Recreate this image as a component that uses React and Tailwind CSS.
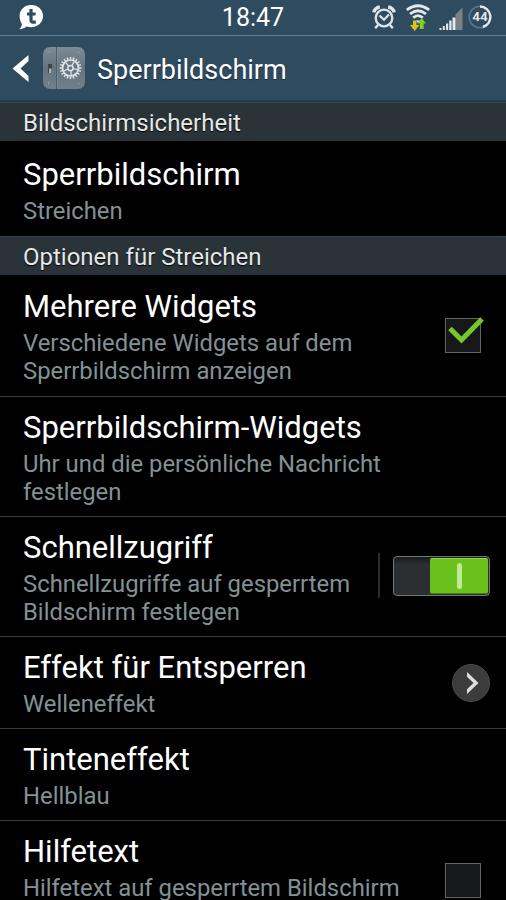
import { useState } from 'react';
import clsx from 'clsx';

const ENTRIES = [
  { type: 'section', label: 'Bildschirmsicherheit' },
  { type: 'row', id: 'lock', title: 'Sperrbildschirm', summary: 'Streichen', spacing: 'pt-[13px] pb-[11px]' },
  { type: 'section', label: 'Optionen für Streichen' },
  { type: 'row', id: 'multi', title: 'Mehrere Widgets', summary: 'Verschiedene Widgets auf dem Sperrbildschirm anzeigen', control: 'checkbox', divider: true, spacing: 'pt-[11px] pb-[11px]' },
  { type: 'row', id: 'widgets', title: 'Sperrbildschirm-Widgets', summary: 'Uhr und die persönliche Nachricht festlegen', divider: true },
  { type: 'row', id: 'shortcuts', title: 'Schnellzugriff', summary: 'Schnellzugriffe auf gesperrtem Bildschirm festlegen', control: 'switch', divider: true },
  { type: 'row', id: 'effect', title: 'Effekt für Entsperren', summary: 'Welleneffekt', control: 'arrow', divider: true },
  { type: 'row', id: 'ink', title: 'Tinteneffekt', summary: 'Hellblau', divider: true },
  { type: 'row', id: 'help', title: 'Hilfetext', summary: 'Hilfetext auf gesperrtem Bildschirm', control: 'checkbox', tall: true },
];

function ChatIcon() {
  return (
    <svg className="-mt-0.5 h-[26px] w-[26px]" viewBox="0 0 26 26">
      <path d="M13.200 1C6.600 1 1.600 5.800 1.600 12c0 3.700 1.200 6.200 2.200 7.800.3 1.800-.6 3.800-2.600 5.400 3.200-.1 5.600-1 7.400-2.600 1.400.4 2.900.6 4.600.6C19.900 23.200 25 18.400 25 12S19.900 1 13.200 1z" fill="#fff" />
      <path d="M13 5v11q0 2.200 2.200 2.200h2.600M9 10h8.600" fill="none" stroke="#2f4b60" strokeWidth="3.200" />
    </svg>
  );
}

function AlarmIcon() {
  return (
    <svg className="-mt-0.5 h-[26px] w-[24px]" viewBox="0 0 24 26" fill="none" stroke="#dfe6ea">
      <circle cx="12" cy="14" r="8.300" strokeWidth="2.300" />
      <path d="M7.500 11.500l4.500 4.300 5-5.300" strokeWidth="2.200" />
      <path d="M1.800 8.300C2.500 5.500 4.800 3.500 7.800 3M22.200 8.300C21.500 5.500 19.200 3.500 16.200 3" strokeWidth="3.400" />
      <path d="M6 21l-2.800 3.200M18 21l2.800 3.200" strokeWidth="2.500" />
    </svg>
  );
}

function WifiIcon() {
  return (
    <svg className="-mt-0.5 h-[28px] w-[26px]" viewBox="0 0 26 28" fill="none">
      <g stroke="#e3e8ea" strokeWidth="2.800">
        <path d="M1.800 7Q13-1.500 24.200 7" />
        <path d="M5 11Q13 4.500 21 11" />
        <path d="M8.200 14.800Q13 10.500 17.800 14.800" />
      </g>
      <path d="M11 17.500h4l-2 2.500z" fill="#e3e8ea" />
      <path d="M8 17.500h3.500v4.500h3l-4.800 6L5 22h3z" fill="#d9c31c" />
      <path d="M14.800 26V20.500h-2.500l4.400-5.500 4.400 5.500h-2.500V26z" fill="#7fd024" />
    </svg>
  );
}

function SignalIcon() {
  return (
    <svg className="mt-0.5 h-[24px] w-[24px]" viewBox="0 0 24 24">
      <path d="M16.500 7.500L23.500 0.500V23h-7z" fill="#7b8085" />
      <path d="M.5 21h2v2h-2zM3.800 19h2v4h-2zM7 16.500h2.200V23H7zM10.200 13.500h2.400V23h-2.400zM13.500 10.500h3V23h-3z" fill="#e3e8ea" />
    </svg>
  );
}

function Battery({ level }) {
  return (
    <div className="relative -mt-0.5 flex h-6 w-6 items-center justify-center">
      <svg className="absolute inset-0 h-6 w-6" viewBox="0 0 24 24" fill="none">
        <circle cx="12" cy="12" r="10.800" stroke="#5d7486" strokeWidth="1.500" />
        <path d="M12 1.500a10.500 10.500 0 0 1 3 20.500" stroke="#e3e8ea" strokeWidth="2.400" />
      </svg>
      <span className="relative text-[13.500px] font-bold leading-none text-[#dfe5e8]">{level}</span>
    </div>
  );
}

function StatusBar() {
  return (
    <div className="grid h-[35px] shrink-0 grid-cols-3 items-center pl-[18px] pr-[14px] text-white">
      <ChatIcon />
      <span className="pr-[4px] pb-px text-center text-[25px] leading-none">18:47</span>
      <div className="flex items-center justify-end">
        <AlarmIcon />
        <div className="ml-[9px]"><WifiIcon /></div>
        <div className="ml-[8px]"><SignalIcon /></div>
        <div className="ml-[5px]"><Battery level={44} /></div>
      </div>
    </div>
  );
}

function SettingsIcon() {
  const teeth = Array.from({ length: 20 }, (_, i) => i * 18);
  return (
    <svg className="h-[44px] w-[44px]" viewBox="0 0 44 44">
      <defs>
        <linearGradient id="plate" x1="0" y1="0" x2="0" y2="1">
          <stop offset="0" stopColor="#7d8b95" />
          <stop offset="0.500" stopColor="#65737e" />
          <stop offset="1" stopColor="#70818c" />
        </linearGradient>
      </defs>
      <rect x="1" y="1" width="42" height="42" rx="7" fill="url(#plate)" />
      <path d="M14.500 1v42" stroke="#4d5d68" />
      <path d="M15.500 1v42" stroke="#84939d" strokeWidth="0.600" />
      <rect x="6" y="18" width="4" height="9" fill="#38434b" />
      <rect x="7" y="22.500" width="2.500" height="4.500" fill="#aab3b8" />
      <path d="M5 6h4M6.500 36v3M35 6l3 1M36 37l2 1" stroke="#8997a1" />
      <g stroke="#dfe4e6" fill="none">
        {teeth.map((a) => (
          <path key={a} d="M28.500 11v2.500" strokeWidth="1.500" transform={`rotate(${a} 28.500 22)`} />
        ))}
        <circle cx="28.500" cy="22" r="8" strokeWidth="1.700" />
        <circle cx="28.500" cy="22" r="2.600" strokeWidth="1.500" />
        {[30, 102, 174, 246, 318].map((a) => (
          <path key={a} d="M28.500 19.500v-5" strokeWidth="1.300" transform={`rotate(${a} 28.500 22)`} />
        ))}
      </g>
    </svg>
  );
}

function ActionBar() {
  return (
    <header className="flex h-[67px] shrink-0 items-center border-b-2 border-t border-b-[#223b4c] border-t-[#668194] pl-[12px] text-white">
      <svg className="h-[28px] w-[18px]" viewBox="0 0 18 28">
        <path d="M.5 14.500L16.500 1v6L8.500 14.500l8 7.500v6z" fill="#fff" />
      </svg>
      <div className="ml-[12px]"><SettingsIcon /></div>
      <h1 className="ml-[11px] pt-[4px] text-[27px] leading-none [text-shadow:0_1px_1px_#142532]">Sperrbildschirm</h1>
    </header>
  );
}

function Checkbox({ checked, onChange }) {
  return (
    <button onClick={onChange} className="relative h-[35px] w-9 border border-[#626466] bg-[#16181a]">
      {checked && (
        <svg className="absolute -left-px -top-[3px] h-[38px] w-[42px]" viewBox="0 0 42 38" fill="none">
          <path d="M5 12.500l11.500 11.500L37 3" stroke="#76c62c" strokeWidth="5" />
        </svg>
      )}
    </button>
  );
}

function Switch({ on, onChange }) {
  return (
    <div className="-mt-0.5 flex items-center">
      <div className="h-[45px] w-0.5 bg-[#2c2d2e]" />
      <button
        onClick={onChange}
        className={clsx('ml-[13px] flex h-[40px] w-[97px] rounded-[4px] border border-[#747674] bg-linear-to-b from-[#181b1d] to-[#2b2f32] to-20% p-px', on ? 'justify-end' : 'justify-start')}
      >
        <span className={clsx('flex h-full w-[58px] items-center justify-center rounded-[2px] border-t border-b', on ? 'border-t-[#94d757] border-b-[#438213] bg-[#6bc01b]' : 'border-[#555] bg-[#444]')}>
          <span className="h-[26px] w-[5px] rounded-full bg-[#c0ea9a]" />
        </span>
      </button>
    </div>
  );
}

function ArrowButton() {
  return (
    <svg className="h-[38px] w-[38px]" viewBox="0 0 38 38">
      <circle cx="19" cy="19" r="18.500" fill="#3c3c3c" stroke="#4a4a4a" />
      <path d="M15 8l11.500 11L15 30v-4.800l6.500-6.200L15 12.800z" fill="#dedede" />
    </svg>
  );
}

function Row({ entry, value, onToggle }) {
  return (
    <div
      className={clsx(
        'flex shrink-0 items-center pl-[23px]',
        entry.spacing || 'py-2.5',
        entry.divider && 'border-b border-[#3a3a3a]',
        entry.control === 'checkbox' ? 'pr-[25px]' : 'pr-[16px]',
      )}
    >
      <div className={clsx('w-[385px] shrink-0', entry.tall && 'h-[99px]')}>
        <h2 className="text-[31px] leading-[42px] text-white">{entry.title}</h2>
        <p className={clsx('mt-px text-[23.850px] leading-[28px] text-[#839195]', entry.control === 'switch' ? 'w-[340px]' : 'w-[385px]')}>{entry.summary}</p>
      </div>
      <div className="-ml-[60px] flex flex-1 justify-end">
        {entry.control === 'checkbox' && <Checkbox checked={value} onChange={onToggle} />}
        {entry.control === 'switch' && <Switch on={value} onChange={onToggle} />}
        {entry.control === 'arrow' && <ArrowButton />}
      </div>
    </div>
  );
}

export default function App() {
  const [values, setValues] = useState({ multi: true, shortcuts: true, help: false });

  const toggle = (id) => setValues((v) => ({ ...v, [id]: !v[id] }));

  return (
    <div className="flex h-[900px] w-[506px] flex-col overflow-hidden bg-[#2f4b60] font-['Roboto',sans-serif]">
      <StatusBar />
      <ActionBar />
      <main className="flex min-h-0 flex-1 flex-col overflow-hidden bg-black">
        {ENTRIES.map((entry) =>
          entry.type === 'section' ? (
            <div key={entry.label} className="flex h-[39px] shrink-0 items-center border-t border-[#384348] bg-[#293338] pl-[23px] pt-px text-[24px] leading-none text-[#e6e8e9] [text-shadow:0_1px_1px_#000]">
              {entry.label}
            </div>
          ) : (
            <Row key={entry.id} entry={entry} value={values[entry.id]} onToggle={() => toggle(entry.id)} />
          )
        )}
      </main>
    </div>
  );
}
